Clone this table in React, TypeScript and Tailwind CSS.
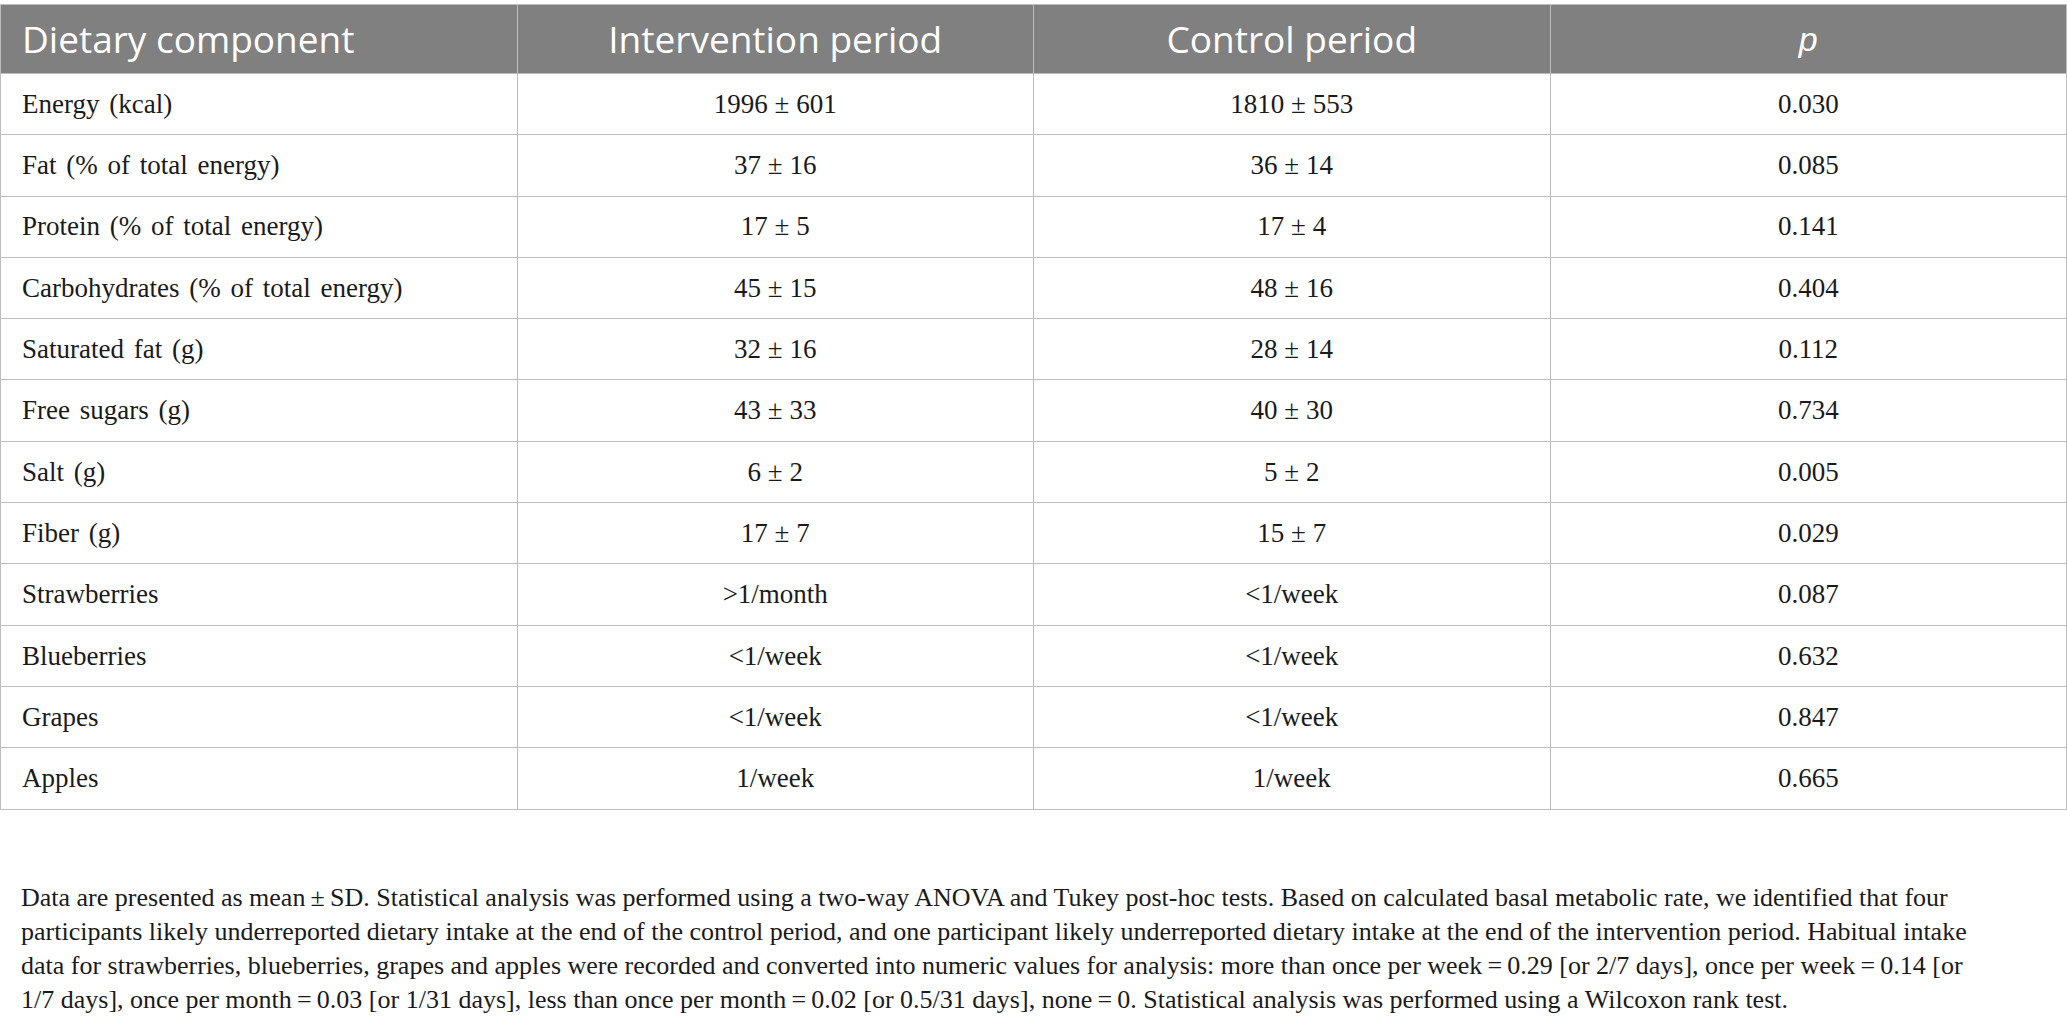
import React from "react";

const rows: [string, string, string, string][] = [
  ["Energy (kcal)", "1996 ± 601", "1810 ± 553", "0.030"],
  ["Fat (% of total energy)", "37 ± 16", "36 ± 14", "0.085"],
  ["Protein (% of total energy)", "17 ± 5", "17 ± 4", "0.141"],
  ["Carbohydrates (% of total energy)", "45 ± 15", "48 ± 16", "0.404"],
  ["Saturated fat (g)", "32 ± 16", "28 ± 14", "0.112"],
  ["Free sugars (g)", "43 ± 33", "40 ± 30", "0.734"],
  ["Salt (g)", "6 ± 2", "5 ± 2", "0.005"],
  ["Fiber (g)", "17 ± 7", "15 ± 7", "0.029"],
  ["Strawberries", ">1/month", "<1/week", "0.087"],
  ["Blueberries", "<1/week", "<1/week", "0.632"],
  ["Grapes", "<1/week", "<1/week", "0.847"],
  ["Apples", "1/week", "1/week", "0.665"],
];

const serif = "font-['Liberation_Serif','Times_New_Roman',serif]";
const head = "border border-[#bdbdbd] font-normal text-white text-[37px] font-['Open_Sans',sans-serif]";
const cell = `border border-[#bdbdbd] text-[27px] text-[#1a1a1a] ${serif}`;

export default function App() {
  return (
    <div className="w-[2067px] h-[1032px] bg-white overflow-hidden pt-[4px]">
      <table className="w-full table-fixed border-collapse">
        <thead>
          <tr className="bg-[#808080] h-[69px]">
            <th className={`w-1/4 text-left pl-[21px] ${head}`}>Dietary component</th>
            <th className={`w-1/4 text-center ${head}`}>Intervention period</th>
            <th className={`w-1/4 text-center ${head}`}>Control period</th>
            <th className="w-1/4 border border-[#bdbdbd] text-center font-normal italic text-white text-[34px] font-['Liberation_Sans',Arial,sans-serif]">
              p
            </th>
          </tr>
        </thead>
        <tbody>
          {rows.map((r) => (
            <tr key={r[0]} className="h-[61.3px]">
              <td className={`pl-[21px] text-left [word-spacing:3px] ${cell}`}>{r[0]}</td>
              <td className={`text-center ${cell}`}>{r[1]}</td>
              <td className={`text-center ${cell}`}>{r[2]}</td>
              <td className={`text-center ${cell}`}>{r[3]}</td>
            </tr>
          ))}
        </tbody>
      </table>
      <p className={`mt-[71px] pl-[21px] text-[26px] leading-[34px] text-[#1a1a1a] whitespace-nowrap ${serif}`}>
        Data are presented as mean{"\u2009±\u2009"}SD. Statistical analysis was performed using a two-way ANOVA and Tukey post-hoc tests. Based on calculated basal metabolic rate, we identified that four
        <br />
        participants likely underreported dietary intake at the end of the control period, and one participant likely underreported dietary intake at the end of the intervention period. Habitual intake
        <br />
        data for strawberries, blueberries, grapes and apples were recorded and converted into numeric values for analysis: more than once per week{"\u2009=\u2009"}0.29 [or 2/7 days], once per week{"\u2009=\u2009"}0.14 [or
        <br />
        1/7 days], once per month{"\u2009=\u2009"}0.03 [or 1/31 days], less than once per month{"\u2009=\u2009"}0.02 [or 0.5/31 days], none{"\u2009=\u2009"}0. Statistical analysis was performed using a Wilcoxon rank test.
      </p>
    </div>
  );
}
